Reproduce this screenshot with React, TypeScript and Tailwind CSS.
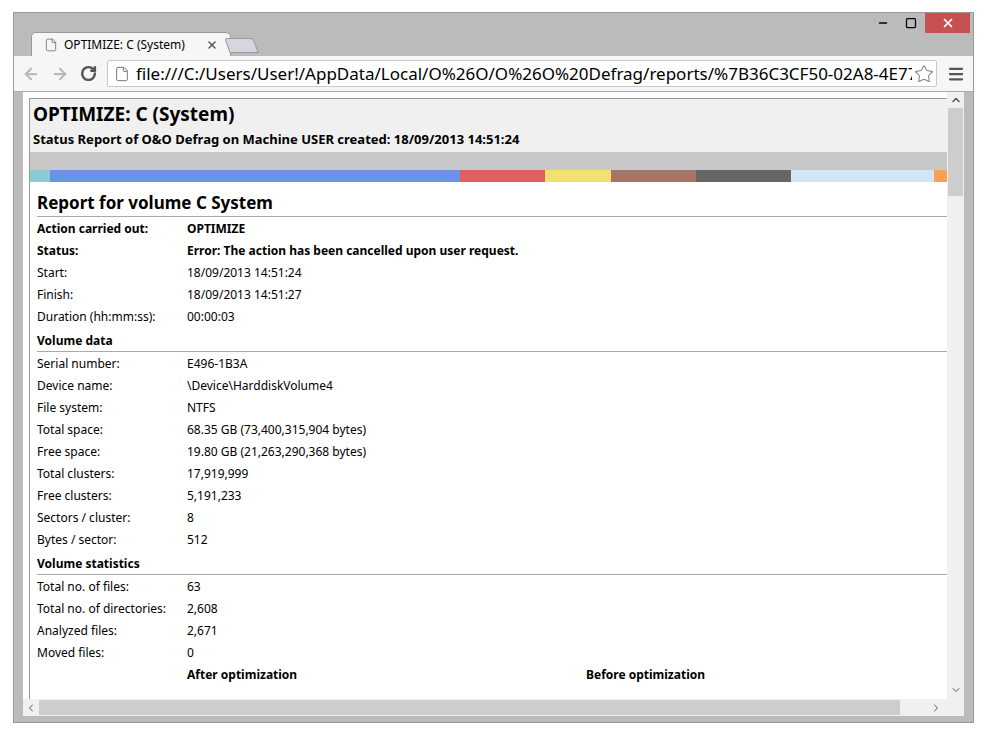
import { ArrowLeft, ArrowRight, RotateCw, File, Star, Menu, X, Minus, Square, ChevronUp, ChevronDown, ChevronLeft, ChevronRight } from "lucide-react";

type Row = [string, string, boolean?];

const general: Row[] = [
  ["Action carried out:", "OPTIMIZE", true],
  ["Status:", "Error: The action has been cancelled upon user request.", true],
  ["Start:", "18/09/2013 14:51:24"],
  ["Finish:", "18/09/2013 14:51:27"],
  ["Duration (hh:mm:ss):", "00:00:03"],
];
const volume: Row[] = [
  ["Serial number:", "E496-1B3A"],
  ["Device name:", "\\Device\\HarddiskVolume4"],
  ["File system:", "NTFS"],
  ["Total space:", "68.35 GB (73,400,315,904 bytes)"],
  ["Free space:", "19.80 GB (21,263,290,368 bytes)"],
  ["Total clusters:", "17,919,999"],
  ["Free clusters:", "5,191,233"],
  ["Sectors / cluster:", "8"],
  ["Bytes / sector:", "512"],
];
const stats: Row[] = [
  ["Total no. of files:", "63"],
  ["Total no. of directories:", "2,608"],
  ["Analyzed files:", "2,671"],
  ["Moved files:", "0"],
];

const bar = [
  ["bg-[#8ccbd5]", "w-[20px]"],
  ["bg-[#6a93e8]", "w-[410px]"],
  ["bg-[#e06060]", "w-[85px]"],
  ["bg-[#f2e070]", "w-[66px]"],
  ["bg-[#a57565]", "w-[85px]"],
  ["bg-[#666666]", "w-[95px]"],
  ["bg-[#d2e6fa]", "w-[143px]"],
  ["bg-[#ffa050]", "flex-1"],
];

function Rows({ rows }: { rows: Row[] }) {
  return (
    <>
      {rows.map(([k, v, b]) => (
        <div key={k} className={`flex h-[22px] items-center ${b ? "font-bold" : ""}`}>
          <div className="w-[157px] shrink-0 pl-[7px]">{k}</div>
          <div className="whitespace-nowrap">{v}</div>
        </div>
      ))}
    </>
  );
}

function Heading({ children }: { children: string }) {
  return (
    <div className="ml-[7px] flex h-[24px] items-end border-b border-[#aaa] pb-[1px] font-bold">
      {children}
    </div>
  );
}

export default function App() {
  return (
    <div className="h-[738px] w-[987px] overflow-hidden bg-white pl-[13px] pt-[12px] font-['Liberation_Sans'] text-black">
      <div className="flex h-[711px] w-[961px] flex-col overflow-hidden border border-[#999] bg-[#bbbbbb]">
        {/* title / tabs */}
        <div className="relative h-[43px] shrink-0">
          <div className="absolute right-[3px] top-0 flex items-start">
            <div className="flex h-[20px] w-[28px] items-center justify-center"><Minus className="h-3 w-3 text-black" strokeWidth={3} /></div>
            <div className="flex h-[20px] w-[28px] items-center justify-center"><Square className="h-3 w-3 text-black" strokeWidth={2.5} /></div>
            <div className="flex h-[20px] w-[45px] items-center justify-center bg-[#c75050]"><X className="h-3.5 w-3.5 text-white" strokeWidth={3} /></div>
          </div>
          <div className="absolute bottom-0 left-[17px] flex h-[24px] w-[200px] items-center rounded-t-[5px] border border-b-0 border-[#999] bg-[#f6f6f6] px-[12px] text-[12px]">
            <File className="mr-[6px] h-[14px] w-[14px] text-[#777]" strokeWidth={1.5} />
            <span className="flex-1 whitespace-nowrap">OPTIMIZE: C (System)</span>
            <X className="h-3 w-3 text-[#555]" strokeWidth={3} />
          </div>
          <div className="absolute bottom-[3px] left-[213px] h-[15px] w-[29px] skew-x-[20deg] rounded-t-[3px] border border-[#999] bg-[#d4d8de]" />
        </div>
        {/* toolbar */}
        <div className="flex h-[36px] shrink-0 items-center border-b border-[#aaa] bg-[#f6f6f6] px-[8px]">
          <ArrowLeft className="h-[18px] w-[18px] shrink-0 text-[#bbb]" strokeWidth={3} />
          <ArrowRight className="ml-[11px] h-[18px] w-[18px] shrink-0 text-[#bbb]" strokeWidth={3} />
          <RotateCw className="ml-[11px] h-[17px] w-[17px] shrink-0 text-[#555]" strokeWidth={3.5} />
          <div className="ml-[10px] flex h-[27px] min-w-0 flex-1 items-center overflow-hidden rounded-[2px] border border-[#c8c8c8] bg-white pl-[6px] text-[17px]">
            <File className="mr-[6px] h-[16px] w-[16px] shrink-0 text-[#777]" strokeWidth={1.5} />
            <span className="min-w-0 flex-1 overflow-hidden whitespace-nowrap">file:///C:/Users/User!/AppData/Local/O%26O/O%26O%20Defrag/reports/%7B36C3CF50-02A8-4E77-8BB6-71</span>
            <Star className="mx-[2px] h-[20px] w-[20px] shrink-0 text-[#888]" strokeWidth={1.3} />
          </div>
          <Menu className="ml-[10px] h-[18px] w-[18px] shrink-0 text-[#555]" strokeWidth={3} />
        </div>
        {/* viewport */}
        <div className="mx-[9px] flex min-h-0 flex-1 flex-col bg-white">
          <div className="flex min-h-0 flex-1 overflow-hidden">
            <div className="min-w-0 flex-1 overflow-hidden pl-[6px] pt-[6px] text-[12px]">
              <div className="h-[700px] border-l border-t border-[#999]">
                <div className="bg-[#f0f0f0] px-[3px] pb-[3px]">
                  <div className="text-[19px] font-bold leading-[30px]">OPTIMIZE: C (System)</div>
                  <div className="text-[13px] font-bold leading-[20px]">Status Report of O&amp;O Defrag on Machine USER created: 18/09/2013 14:51:24</div>
                </div>
                <div className="h-[18px] bg-[#c8c8c8]" />
                <div className="flex h-[12px]">
                  {bar.map(([c, w], i) => (
                    <div key={i} className={`${c} ${w}`} />
                  ))}
                </div>
                <div className="ml-[7px] flex h-[35px] items-end border-b border-[#aaa] pb-[1px] text-[17px] font-bold">Report for volume C System</div>
                <div className="pt-[1px]"><Rows rows={general} /></div>
                <Heading>Volume data</Heading>
                <div className="pt-[1px]"><Rows rows={volume} /></div>
                <Heading>Volume statistics</Heading>
                <div className="pt-[1px]"><Rows rows={stats} /></div>
                <div className="flex h-[22px] items-center font-bold">
                  <div className="w-[157px]" />
                  <div className="w-[399px]">After optimization</div>
                  <div>Before optimization</div>
                </div>
              </div>
            </div>
            <div className="flex w-[17px] shrink-0 flex-col items-center bg-[#f0f0f0]">
              <ChevronUp className="mt-[2px] h-[12px] w-[12px] text-[#555]" strokeWidth={3} />
              <div className="mt-[2px] h-[88px] w-[15px] bg-[#cdcdcd]" />
              <div className="flex-1" />
              <ChevronDown className="mb-[3px] h-[12px] w-[12px] text-[#555]" strokeWidth={2} />
            </div>
          </div>
          <div className="flex h-[17px] shrink-0 items-center bg-[#f0f0f0]">
            <ChevronLeft className="ml-[2px] h-[12px] w-[12px] text-[#555]" strokeWidth={2} />
            <div className="ml-[2px] h-[15px] w-[861px] bg-[#cdcdcd]" />
            <div className="flex-1" />
            <ChevronRight className="mr-[22px] h-[12px] w-[12px] text-[#555]" strokeWidth={2} />
          </div>
          <div className="h-[6px] shrink-0 bg-[#bbbbbb]" />
        </div>
      </div>
    </div>
  );
}
